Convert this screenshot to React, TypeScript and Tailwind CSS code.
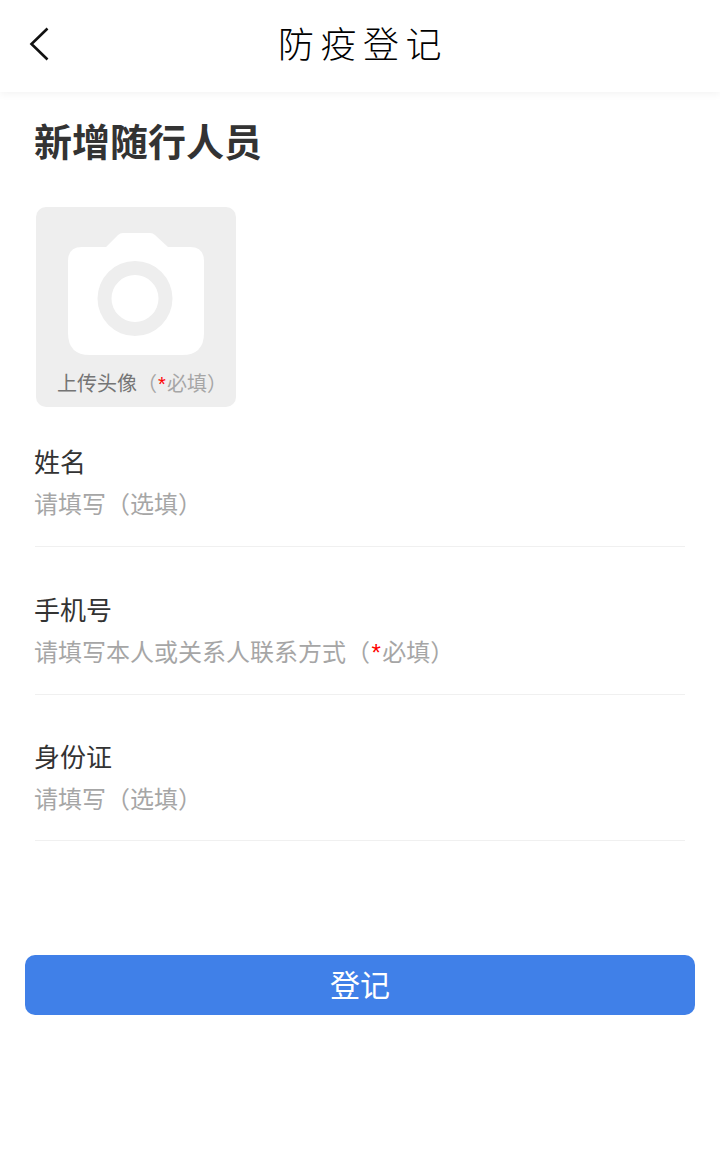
import React from 'react';

const FONT = "font-['Roboto','Noto_Sans_CJK_SC',sans-serif]";

const CameraIcon = () => (
    <svg width="136" height="122" viewBox="0 0 136 122" className="block">
        <path
            fillRule="evenodd"
            fill="#ffffff"
            d="M38 14 L50 2 Q52 0 55 0 L82 0 Q85 0 87 2 L100 14 L122 14 Q136 14 136 28 L136 100 Q136 122 114 122 L22 122 Q0 122 0 100 L0 28 Q0 14 14 14 Z M67 28 A37.5 37.5 0 1 0 67 103 A37.5 37.5 0 1 0 67 28 Z M67 42 A23.5 23.5 0 1 1 67 89 A23.5 23.5 0 1 1 67 42 Z"
        />
    </svg>
);

const Required = () => (
    <>
        （<span className="px-[0.06em] font-['Liberation_Sans',sans-serif] text-[#ff0000]">*</span>必填）
    </>
);

const Field: React.FC<{ label: string; className: string; children: React.ReactNode }> = ({ label, className, children }) => (
    <div className={`flex flex-col border-b border-[#f0f0f0] ${className}`}>
        <div className="-ml-px mt-px text-[26px] leading-[36px] text-[#333333]">{label}</div>
        <div className="-ml-px mt-[7px] text-[24px] leading-[34px] text-[#a6a6a6]">{children}</div>
    </div>
);

const App: React.FC = () => {
    return (
        <div className={`flex min-h-[1151px] flex-col bg-white ${FONT}`}>
            <header className="relative flex h-[92px] items-center justify-center bg-white shadow-[0_2px_8px_rgba(0,0,0,0.05)]">
                <svg width="20" height="34" viewBox="0 0 20 34" className="absolute left-[29px] top-[27px]">
                    <path d="M18.5 1.5 L2.5 17 L18.5 32.5" fill="none" stroke="#111111" strokeWidth="2.6" />
                </svg>
                <h1 className="pl-[6px] text-[36px] font-light leading-[44px] tracking-[6.5px] text-black">防疫登记</h1>
            </header>

            <main className="flex flex-col px-[35px]">
                <h2 className="-ml-px mt-[26px] text-[38px] font-bold leading-[50px] text-[#333333]">新增随行人员</h2>

                <div className="ml-px mt-[39px] flex h-[200px] w-[200px] flex-col items-center rounded-[10px] bg-[#eeeeee] pt-[26px]">
                    <CameraIcon />
                    <div className="mt-[14px] whitespace-nowrap pl-[12px] text-[20px] leading-[30px] text-[#757575]">
                        上传头像<span className="text-[#a6a6a6]"><Required /></span>
                    </div>
                </div>

                <Field label="姓名" className="mt-[37px] h-[103px]">请填写（选填）</Field>
                <Field label="手机号" className="mt-[45px] h-[103px]">
                    请填写本人或关系人联系方式<Required />
                </Field>
                <Field label="身份证" className="mt-[44px] h-[102px]">请填写（选填）</Field>
            </main>

            <div className="mt-[114px] px-[25px]">
                <button className="h-[60px] w-full rounded-[10px] bg-[#4080e8] text-[30px] text-white">登记</button>
            </div>
        </div>
    );
};

export default App;
